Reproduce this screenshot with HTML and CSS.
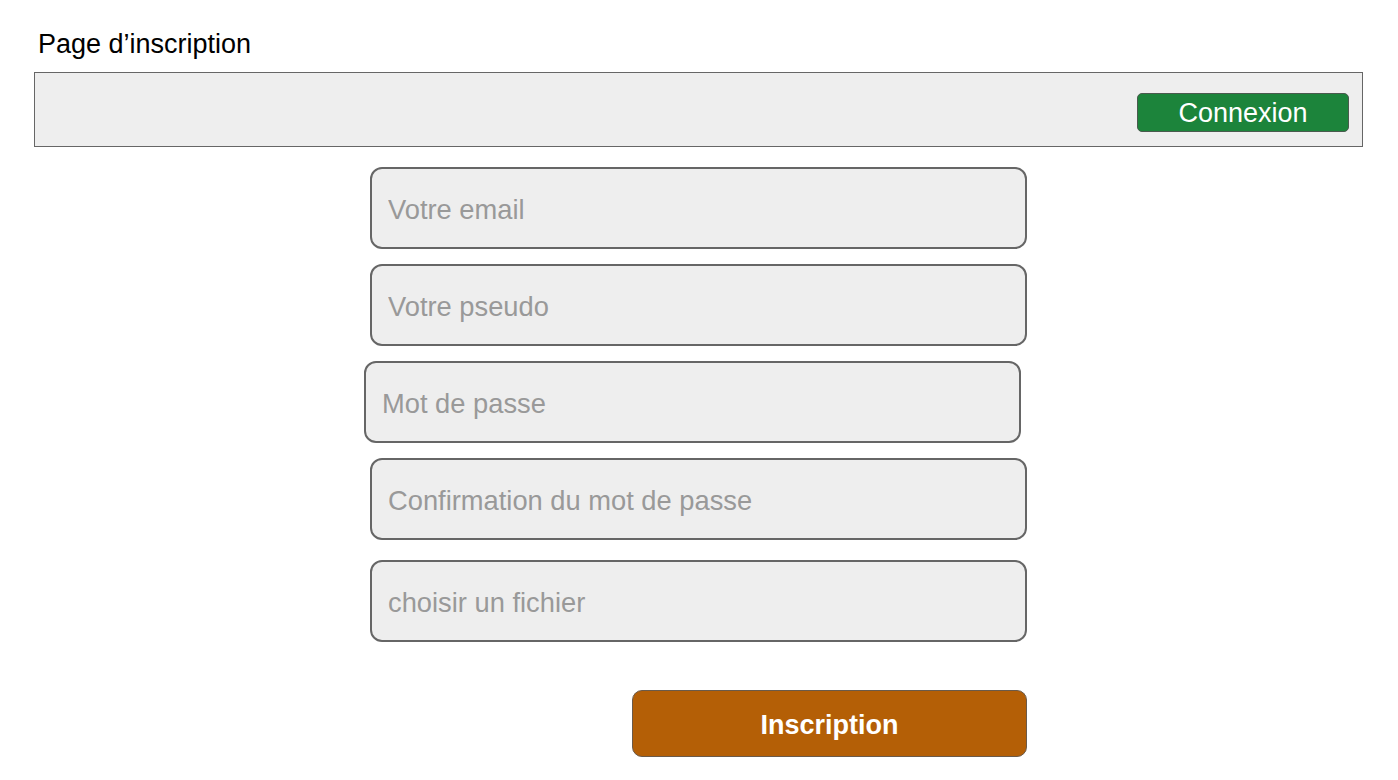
FILE: index.html
```html
<!DOCTYPE html>
<html lang="fr">
<head>
<meta charset="utf-8">
<title>Page d’inscription</title>
<link rel="stylesheet" href="styles.css">
</head>
<body>
<div class="page">
  <h1 class="title">Page d’inscription</h1>
  <header class="topbar">
    <button class="btn-login" type="button">Connexion</button>
  </header>
  <form class="form">
    <input class="field" type="email" placeholder="Votre email">
    <input class="field" type="text" placeholder="Votre pseudo">
    <input class="field field-shift" type="password" placeholder="Mot de passe">
    <input class="field" type="password" placeholder="Confirmation du mot de passe">
    <input class="field field-file" type="text" placeholder="choisir un fichier">
    <button class="btn-submit" type="button">Inscription</button>
  </form>
</div>
</body>
</html>
```
FILE: styles.css
```css
* { box-sizing: border-box; }
html, body { margin: 0; padding: 0; background: #ffffff; }
body {
  font-family: "Liberation Sans", Arial, sans-serif;
  color: #000;
}
.page {
  padding: 29px 35px 0 34px;
}
.title {
  margin: 0 0 12px 0;
  padding-left: 4px;
  font-size: 27px;
  font-weight: normal;
  line-height: 31px;
  height: 31px;
}
.topbar {
  height: 75px;
  background: #eeeeee;
  border: 1px solid #666666;
  display: flex;
  justify-content: flex-end;
  align-items: flex-start;
  padding: 20px 13px 0 0;
}
.btn-login {
  width: 212px;
  height: 39px;
  background: #1c843b;
  border: 1px solid #4a5a4e;
  border-radius: 5px;
  color: #ffffff;
  font-family: "Liberation Sans", Arial, sans-serif;
  font-size: 27px;
  padding: 0;
  line-height: 36px;
}
.form {
  margin: 20px 0 0 336px;
  width: 657px;
  display: flex;
  flex-direction: column;
  gap: 15px;
}
.field {
  width: 657px;
  height: 82px;
  background: #eeeeee;
  border: 2px solid #666666;
  border-radius: 12px;
  padding: 4px 0 0 16px;
  font-family: "Liberation Sans", Arial, sans-serif;
  font-size: 27.3px;
  color: #333;
  outline: none;
}
.field::placeholder { color: #999999; opacity: 1; }
.field-shift { margin-left: -6px; }
.field-file { margin-top: 5px; }
.btn-submit {
  margin-top: 33px;
  align-self: flex-end;
  width: 395px;
  height: 67px;
  background: #b45f06;
  border: 1px solid #6a5a4a;
  border-radius: 10px;
  color: #ffffff;
  font-family: "Liberation Sans", Arial, sans-serif;
  font-size: 27px;
  font-weight: bold;
  padding: 4px 0 0 0;
}
```
